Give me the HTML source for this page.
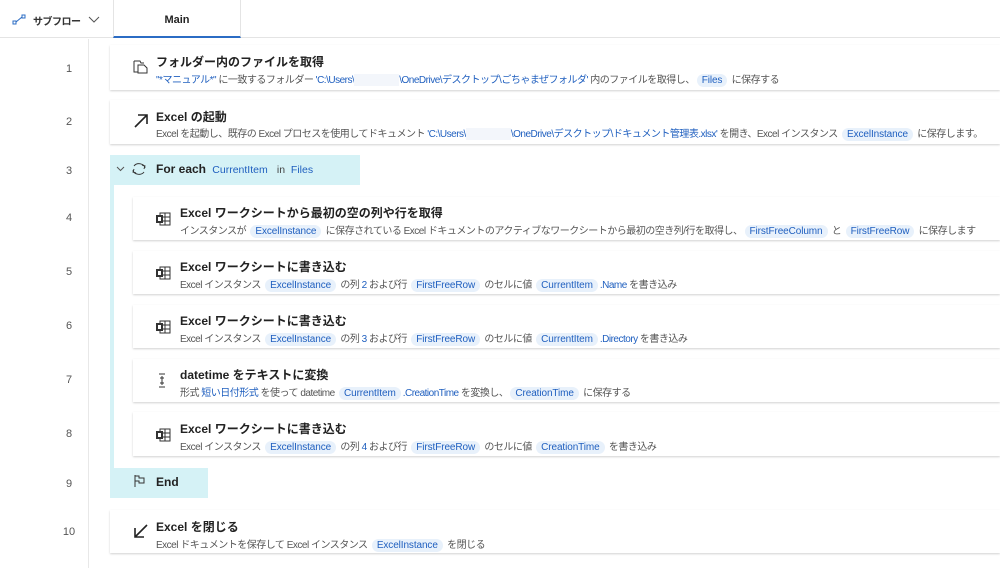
<!DOCTYPE html>
<html><head><meta charset="utf-8"><style>
*{margin:0;padding:0;box-sizing:border-box}
body{width:1000px;height:568px;overflow:hidden;background:#fff;font-family:"Liberation Sans","Noto Sans CJK JP",sans-serif;color:#242424;position:relative}
.abs{position:absolute}
.card{position:absolute;background:#fff;box-shadow:0 1px 2px rgba(0,0,0,.18);right:0}
.t{position:absolute;font-size:12px;font-weight:bold;white-space:nowrap;color:#222}
.s{position:absolute;font-size:10px;white-space:nowrap;color:#555;letter-spacing:-.5px}
.b{color:#1f5fbf}
.p{background:#e8f1fb;color:#1f5fbf;border-radius:8px;padding:1px 5px;margin:0 2px;letter-spacing:-.1px}
.n{position:absolute;left:55px;width:28px;text-align:center;font-size:11px;color:#555}
.ic{position:absolute}
.blur{display:inline-block;width:45px;height:12px;background:#f3f6fb;vertical-align:middle}
</style></head><body>
<div class="abs" style="left:0;top:0;width:1000px;height:38px;border-bottom:1px solid #e4e4e4"></div>
<div class="abs" style="left:113px;top:0;width:128px;height:38px;border-left:1px solid #e4e4e4;border-right:1px solid #e4e4e4;border-bottom:2px solid #2b6cc4"></div>
<div class="abs" style="left:113px;top:14px;width:128px;text-align:center;font-size:11px;font-weight:bold">Main</div>
<svg class="abs" style="left:12px;top:14px" width="16" height="12"><rect x="1" y="7" width="3" height="3" fill="none" stroke="#2b6cc4"/><rect x="10" y="1" width="3" height="3" fill="none" stroke="#2b6cc4"/><path d="M4 8 L10 3" stroke="#2b6cc4"/></svg>
<div class="abs" style="left:33px;top:13px;font-size:10px;font-weight:bold;color:#333;letter-spacing:-.5px">サブフロー</div>
<svg class="abs" style="left:88px;top:16px" width="12" height="8"><path d="M1 1 L6 6 L11 1" fill="none" stroke="#555"/></svg>
<div class="abs" style="left:88px;top:39px;width:1px;height:529px;background:#e8e8e8"></div>

<div class="abs" style="left:110px;top:155px;width:250px;height:30px;background:#d5f2f6"></div>
<div class="abs" style="left:110px;top:185px;width:4px;height:283px;background:#d5f2f6"></div>
<div class="abs" style="left:110px;top:468px;width:98px;height:30px;background:#d5f2f6"></div>

<div class="n" style="top:63px">1</div>
<div class="card" style="left:110px;top:45px;height:45px"></div>
<svg class="ic" style="left:133px;top:60px" width="16" height="14"><path d="M1 1h6l1 2h3M1 1v11h4" fill="none" stroke="#333"/><path d="M5 5h6l3 3v5H5z" fill="none" stroke="#333"/></svg>
<div class="t" style="left:156px;top:53px">フォルダー内のファイルを取得</div>
<div class="s" style="left:156px;top:71px"><span class="b">"*マニュアル*"</span> に一致するフォルダー <span class="b">'C:\Users\<span class="blur"></span>\OneDrive\デスクトップ\ごちゃまぜフォルダ'</span> 内のファイルを取得し、<span class="p">Files</span> に保存する</div>

<div class="n" style="top:116px">2</div>
<div class="card" style="left:110px;top:100px;height:44px"></div>
<svg class="ic" style="left:133px;top:113px" width="16" height="16"><path d="M2 14 L14 2 M5 2h9v9" fill="none" stroke="#222" stroke-width="1.6"/></svg>
<div class="t" style="left:156px;top:108px">Excel の起動</div>
<div class="s" style="left:156px;top:125px">Excel を起動し、既存の Excel プロセスを使用してドキュメント <span class="b">'C:\Users\<span class="blur"></span>\OneDrive\デスクトップ\ドキュメント管理表.xlsx'</span> を開き、Excel インスタンス <span class="p">ExcelInstance</span> に保存します。</div>

<div class="n" style="top:165px">3</div>
<svg class="ic" style="left:116px;top:166px" width="9" height="6"><path d="M1 1 L4.5 4.5 L8 1" fill="none" stroke="#555"/></svg>
<svg class="ic" style="left:131px;top:162px" width="16" height="14"><path d="M3 4a6 5 0 0 1 11 2M13 10a6 5 0 0 1-11-2M11 3l3 1-1 3M5 11l-3-1 1-3" fill="none" stroke="#333"/></svg>
<div class="t" style="left:156px;top:162px">For each <span style="font-weight:normal;font-size:10.5px" class="b">&nbsp;CurrentItem</span> <span style="font-weight:normal;font-size:10.5px;color:#444">&nbsp; in &nbsp;</span><span style="font-weight:normal;font-size:10.5px" class="b">Files</span></div>

<div class="n" style="top:212px">4</div>
<div class="card" style="left:133px;top:197px;height:43px"></div>
<div class="t" style="left:180px;top:204px">Excel ワークシートから最初の空の列や行を取得</div>
<div class="s" style="left:180px;top:222px">インスタンスが <span class="p">ExcelInstance</span> に保存されている Excel ドキュメントのアクティブなワークシートから最初の空き列/行を取得し、<span class="p">FirstFreeColumn</span> と <span class="p">FirstFreeRow</span> に保存します</div>

<div class="n" style="top:266px">5</div>
<div class="card" style="left:133px;top:251px;height:43px"></div>
<div class="t" style="left:180px;top:258px">Excel ワークシートに書き込む</div>
<div class="s" style="left:180px;top:276px">Excel インスタンス <span class="p">ExcelInstance</span> の列 <span class="b">2</span> および行 <span class="p">FirstFreeRow</span> のセルに値 <span class="p">CurrentItem</span><span class="b">.Name</span> を書き込み</div>

<div class="n" style="top:320px">6</div>
<div class="card" style="left:133px;top:305px;height:43px"></div>
<div class="t" style="left:180px;top:312px">Excel ワークシートに書き込む</div>
<div class="s" style="left:180px;top:330px">Excel インスタンス <span class="p">ExcelInstance</span> の列 <span class="b">3</span> および行 <span class="p">FirstFreeRow</span> のセルに値 <span class="p">CurrentItem</span><span class="b">.Directory</span> を書き込み</div>

<div class="n" style="top:374px">7</div>
<div class="card" style="left:133px;top:359px;height:43px"></div>
<svg class="ic" style="left:157px;top:373px" width="10" height="16"><path d="M2 1h6M2 14h6M5 3v9M3 5h4M3 10h4" fill="none" stroke="#333"/></svg>
<div class="t" style="left:180px;top:366px">datetime をテキストに変換</div>
<div class="s" style="left:180px;top:384px">形式 <span class="b">短い日付形式</span> を使って datetime <span class="p">CurrentItem</span><span class="b">.CreationTime</span> を変換し、<span class="p">CreationTime</span> に保存する</div>

<div class="n" style="top:428px">8</div>
<div class="card" style="left:133px;top:412px;height:44px"></div>
<div class="t" style="left:180px;top:420px">Excel ワークシートに書き込む</div>
<div class="s" style="left:180px;top:438px">Excel インスタンス <span class="p">ExcelInstance</span> の列 <span class="b">4</span> および行 <span class="p">FirstFreeRow</span> のセルに値 <span class="p">CreationTime</span> を書き込み</div>

<div class="n" style="top:478px">9</div>
<svg class="ic" style="left:133px;top:474px" width="14" height="14"><path d="M2 1v12M2 2h4v2h5v5H6V7H2" fill="none" stroke="#333"/></svg>
<div class="t" style="left:156px;top:475px">End</div>

<div class="n" style="top:526px">10</div>
<div class="card" style="left:110px;top:510px;height:43px"></div>
<svg class="ic" style="left:133px;top:523px" width="16" height="16"><path d="M14 2 L2 14 M2 5v9h9" fill="none" stroke="#222" stroke-width="1.6"/></svg>
<div class="t" style="left:156px;top:518px">Excel を閉じる</div>
<div class="s" style="left:156px;top:536px">Excel ドキュメントを保存して Excel インスタンス <span class="p">ExcelInstance</span> を閉じる</div>

<svg class="ic" style="left:155px;top:212px" width="16" height="14"><rect x="5" y="1" width="10" height="12" fill="none" stroke="#333"/><path d="M5 5h10M5 9h10M10 1v12" stroke="#333"/><rect x="1" y="3" width="7" height="8" fill="#333"/><rect x="3" y="5" width="3" height="4" fill="#fff"/></svg>
<svg class="ic" style="left:155px;top:266px" width="16" height="14"><rect x="5" y="1" width="10" height="12" fill="none" stroke="#333"/><path d="M5 5h10M5 9h10M10 1v12" stroke="#333"/><rect x="1" y="3" width="7" height="8" fill="#333"/><rect x="3" y="5" width="3" height="4" fill="#fff"/></svg>
<svg class="ic" style="left:155px;top:320px" width="16" height="14"><rect x="5" y="1" width="10" height="12" fill="none" stroke="#333"/><path d="M5 5h10M5 9h10M10 1v12" stroke="#333"/><rect x="1" y="3" width="7" height="8" fill="#333"/><rect x="3" y="5" width="3" height="4" fill="#fff"/></svg>
<svg class="ic" style="left:155px;top:428px" width="16" height="14"><rect x="5" y="1" width="10" height="12" fill="none" stroke="#333"/><path d="M5 5h10M5 9h10M10 1v12" stroke="#333"/><rect x="1" y="3" width="7" height="8" fill="#333"/><rect x="3" y="5" width="3" height="4" fill="#fff"/></svg>
</body></html>
